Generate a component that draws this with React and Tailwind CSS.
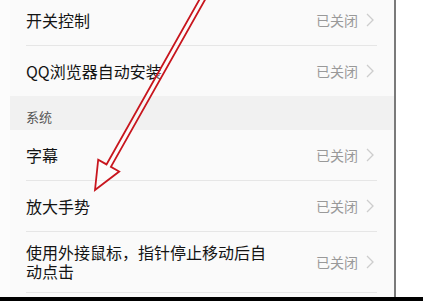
import React from "react";

const font = { fontFamily: '"Noto Sans CJK SC", "Noto Sans", sans-serif' };

function Chevron() {
  return (
    <svg width="8" height="14" viewBox="0 0 8 14" className="shrink-0">
      <path d="M1 1 L7 7 L1 13" fill="none" stroke="#cdcdcd" strokeWidth="1.3" />
    </svg>
  );
}

function Row({ label, tall }) {
  return (
    <div className="flex flex-col">
      <div className={`flex items-center justify-between pl-[16px] pr-[20px] ${tall ? "h-[60px]" : "h-[50px]"}`}>
        <div className={`text-[16px] text-[#141414] ${tall ? "w-[246px] leading-[19px]" : "leading-[20px]"}`}>{label}</div>
        <div className="flex items-center gap-[8px]">
          <span className="text-[14px] text-[#999] leading-[18px]">已关闭</span>
          <Chevron />
        </div>
      </div>
      <div className="ml-[16px] mr-[17px] h-px bg-[#e6e6e6]" />
    </div>
  );
}

export default function App() {
  return (
    <div className="relative w-[423px] h-[301px] overflow-hidden bg-white flex flex-col" style={font}>
      <div className="flex flex-1 min-h-0">
        <div className="w-[10px] bg-[#fcfcfc]" />
        <div className="w-[384px] bg-[#fafafa] flex flex-col overflow-hidden">
          <div className="-mt-[5px] flex flex-col">
            <Row label="开关控制" />
            <div className="flex items-center justify-between pl-[16px] pr-[20px] h-[50px]">
              <div className="text-[16px] text-[#141414] leading-[20px]">QQ浏览器自动安装</div>
              <div className="flex items-center gap-[8px]">
                <span className="text-[14px] text-[#999] leading-[18px]">已关闭</span>
                <Chevron />
              </div>
            </div>
            <div className="h-[34px] bg-[#f1f1f1] flex items-end pl-[16px] pb-[4px]">
              <span className="text-[13px] text-[#555] leading-[18px]">系统</span>
            </div>
            <Row label="字幕" />
            <Row label="放大手势" />
            <Row label="使用外接鼠标，指针停止移动后自动点击" tall />
          </div>
        </div>
        <div className="w-[2px] bg-[#7a7a7a]" />
        <div className="flex-1 bg-white" />
      </div>
      <div className="h-[4px] bg-black" />
      <svg className="absolute left-0 top-0 pointer-events-none" width="423" height="301" viewBox="0 0 423 301">
        <polygon
          points="202,-5 207.7,-5 110.9,166.8 119.2,171.5 95,190 98.2,159.7 106.5,164.4"
          fill="rgba(255,255,255,0.35)"
          stroke="#c8161e"
          strokeWidth="1.8"
          strokeLinejoin="miter"
        />
      </svg>
    </div>
  );
}
